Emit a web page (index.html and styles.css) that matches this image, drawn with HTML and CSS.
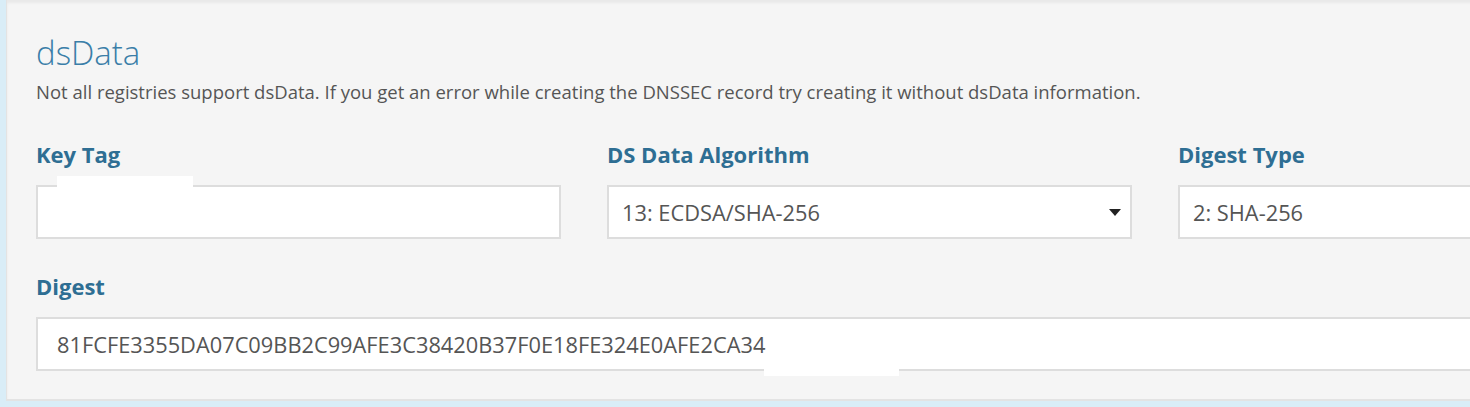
FILE: index.html
```html
<!DOCTYPE html>
<html lang="en">
  <head>
    <meta charset="UTF-8" />
    <meta name="viewport" content="width=device-width, initial-scale=1.0" />
    <title>dsData</title>
    <link rel="stylesheet" href="styles.css">
  </head>

  <body>
    <div class="well">
      <h2 class="section-title">dsData</h2>
      <p class="section-help">
        Not all registries support dsData. If you get an error while creating the DNSSEC record try creating it without dsData information.
      </p>

      <div class="form-row">
        <div class="form-group">
          <label for="keyTag">Key Tag</label>
          <div class="field-wrap">
            <input type="text" id="keyTag" class="form-control" value="" />
            <span class="mask mask-keytag"></span>
          </div>
        </div>
        <div class="form-group">
          <label for="algorithm">DS Data Algorithm</label>
          <div class="field-wrap">
            <select id="algorithm" class="form-control">
              <option>13: ECDSA/SHA-256</option>
            </select>
            <span class="caret"></span>
          </div>
        </div>
        <div class="form-group">
          <label for="digestType">Digest Type</label>
          <input type="text" id="digestType" class="form-control" value="2: SHA-256" />
        </div>
      </div>

      <div class="form-group wide">
        <label for="digest">Digest</label>
        <div class="field-wrap">
          <input type="text" id="digest" class="form-control" value="81FCFE3355DA07C09BB2C99AFE3C38420B37F0E18FE324E0AFE2CA34" />
          <span class="mask mask-digest"></span>
        </div>
      </div>
    </div>
  </body>
</html>
```

FILE: styles.css
```css
html,
body {
  margin: 0;
  padding: 0;
  overflow: hidden;
}

body {
  background-color: #d9edf7;
  font-family: "Open Sans", "Liberation Sans", sans-serif;
  color: #555;
  width: 1800px;
  height: 407px;
}

/* grey panel that holds the form */
.well {
  margin-left: 6px;
  height: 401px;
  box-sizing: border-box;
  padding: 34px 30px 0 29px;
  background-color: #f5f5f5;
  border: 1px solid #e3e3e3;
  border-top: none;
  border-bottom-width: 2px;
  box-shadow: inset 0 3px 3px rgba(0, 0, 0, 0.05);
}

.section-title {
  margin: 0;
  font-size: 33px;
  font-weight: 300;
  line-height: 38px;
  color: #3a7ea8;
}

.section-help {
  margin: 7px 0 0 0;
  font-size: 18.5px;
  line-height: 26px;
  color: #555;
}

.form-row {
  display: grid;
  grid-template-columns: 525px 525px 525px;
  column-gap: 46px;
  margin-top: 34px;
}

.form-group label {
  display: block;
  font-size: 22px;
  font-weight: 700;
  line-height: 30px;
  color: #2e6e93;
  margin-bottom: 16px;
}

.form-group.wide {
  margin-top: 32px;
}

.form-control {
  display: block;
  width: 100%;
  height: 54px;
  box-sizing: border-box;
  padding: 0 13px;
  font-family: "Open Sans", "Liberation Sans", sans-serif;
  font-size: 21.8px;
  color: #555;
  background-color: #fff;
  border: 2px solid #ddd;
  border-radius: 0;
  outline: none;
}

.wide .form-control {
  width: 1500px;
  padding-left: 19px;
}

.field-wrap {
  position: relative;
}

select.form-control {
  appearance: none;
  -webkit-appearance: none;
}

.caret {
  position: absolute;
  right: 11px;
  top: 24px;
  width: 0;
  height: 0;
  border-left: 6px solid transparent;
  border-right: 6px solid transparent;
  border-top: 7px solid #222;
  pointer-events: none;
}

.mask {
  position: absolute;
  background-color: #fff;
}

.mask-keytag {
  left: 21px;
  top: -9px;
  width: 136px;
  height: 12px;
}

.mask-digest {
  left: 728px;
  top: 44px;
  width: 135px;
  height: 15px;
}
```
